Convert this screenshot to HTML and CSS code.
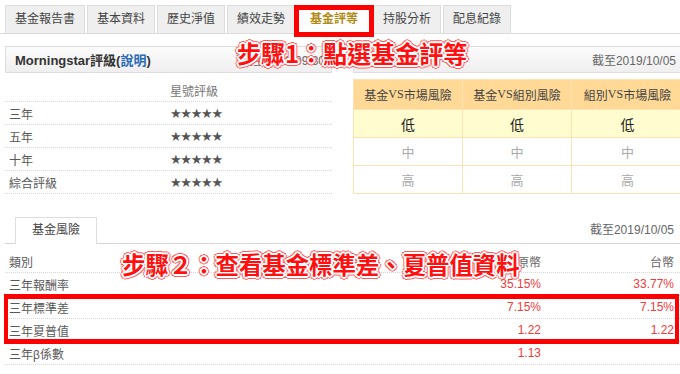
FILE: index.html
```html
<!DOCTYPE html>
<html lang="zh-Hant">
<head>
<meta charset="utf-8">
<title>基金評等</title>
<link rel="stylesheet" href="styles.css">
</head>
<body>
<div class="page">
  <ul class="tabs">
    <li class="tab">基金報告書</li>
    <li class="tab">基本資料</li>
    <li class="tab">歷史淨值</li>
    <li class="tab">績效走勢</li>
    <li class="tab active">基金評等</li>
    <li class="tab">持股分析</li>
    <li class="tab">配息紀錄</li>
  </ul>

  <div class="panels">
    <section class="panel panel-left">
      <div class="box-head">
        <h3 class="box-title">Morningstar評級(<a class="link">說明</a>)</h3>
        <span class="date">截至2019/09/30</span>
      </div>
      <div class="star-table">
        <div class="srow shead"><span class="c1"></span><span class="c2">星號評級</span></div>
        <div class="srow"><span class="c1">三年</span><span class="c2 stars">★★★★★</span></div>
        <div class="srow"><span class="c1">五年</span><span class="c2 stars">★★★★★</span></div>
        <div class="srow"><span class="c1">十年</span><span class="c2 stars">★★★★★</span></div>
        <div class="srow"><span class="c1">綜合評級</span><span class="c2 stars">★★★★★</span></div>
      </div>
    </section>

    <section class="panel panel-right">
      <div class="box-head">
        <h3 class="box-title">風險評估</h3>
        <span class="date">截至2019/10/05</span>
      </div>
      <div class="risk-grid">
        <div class="rg rg-head">基金<span class="vs">VS</span>市場風險</div>
        <div class="rg rg-head">基金<span class="vs">VS</span>組別風險</div>
        <div class="rg rg-head">組別<span class="vs">VS</span>市場風險</div>
        <div class="rg rg-low">低</div>
        <div class="rg rg-low">低</div>
        <div class="rg rg-low">低</div>
        <div class="rg rg-dim">中</div>
        <div class="rg rg-dim">中</div>
        <div class="rg rg-dim">中</div>
        <div class="rg rg-dim">高</div>
        <div class="rg rg-dim">高</div>
        <div class="rg rg-dim">高</div>
      </div>
    </section>
  </div>

  <section class="risk-section">
    <div class="subtabs">
      <span class="subtab">基金風險</span>
      <span class="date">截至2019/10/05</span>
    </div>
    <div class="data-table">
      <div class="drow dhead"><span class="d1">類別</span><span class="d2">原幣</span><span class="d3">台幣</span></div>
      <div class="drow"><span class="d1">三年報酬率</span><span class="d2 val">35.15%</span><span class="d3 val">33.77%</span></div>
      <div class="drow"><span class="d1">三年標準差</span><span class="d2 val">7.15%</span><span class="d3 val">7.15%</span></div>
      <div class="drow"><span class="d1">三年夏普值</span><span class="d2 val">1.22</span><span class="d3 val">1.22</span></div>
      <div class="drow"><span class="d1">三年β係數</span><span class="d2 val">1.13</span><span class="d3 val"></span></div>
    </div>
  </section>

  <div class="hl-box"></div>
  <div class="note note1">步驟1：點選基金評等</div>
  <div class="note note2">步驟２：查看基金標準差、夏普值資料</div>
</div>
</body>
</html>
```

FILE: styles.css
```css
* { box-sizing: border-box; }

html, body {
  margin: 0;
  padding: 0;
  background: #fff;
}

body {
  width: 680px;
  height: 374px;
  overflow: hidden;
  font-family: "Liberation Sans", "Noto Sans CJK TC", sans-serif;
  font-size: 12px;
  color: #595959;
}

.page {
  position: relative;
  width: 690px;
  height: 374px;
}

/* top tabs */
.tabs {
  list-style: none;
  margin: 0;
  padding: 5px 0 0 5px;
  display: flex;
  gap: 2px;
  border-bottom: 1px solid #dcdcdc;
  width: 690px;
}

.tab {
  height: 28px;
  line-height: 27px;
  padding: 0 9px;
  background: #efefef;
  border: 1px solid #dddddd;
  border-bottom: none;
  color: #444;
  margin-bottom: -1px;
}

.tab.active {
  position: relative;
  background: #fff;
  color: #b08a12;
  font-weight: bold;
  padding: 0 12px;
  height: 29px;
}

.tab.active::after {
  content: "";
  position: absolute;
  left: -4px;
  right: -4px;
  top: -1px;
  bottom: -3px;
  border: 5px solid #ff0000;
}

/* panels */
.panels {
  display: flex;
  gap: 21px;
  margin: 12px 0 0 5px;
}

.panel-left { width: 327px; }
.panel-right { width: 330px; }

.box-head {
  height: 27px;
  border: 1px solid #dddddd;
  background: linear-gradient(#fbfbfb, #efefef);
  display: flex;
  align-items: center;
  justify-content: space-between;
  padding: 0 6px 0 9px;
}

.box-title {
  margin: 0;
  font-size: 13px;
  font-weight: bold;
  color: #333;
}

.link { color: #2b6cb5; }

.date {
  color: #666;
  font-size: 12px;
}

.star-table { margin-top: 6px; }

.srow {
  display: flex;
  height: 23px;
  align-items: center;
  border-bottom: 1px dotted #d6d6d6;
}

.srow .c1 { width: 165px; padding-left: 4px; }
.srow .c2 { flex: 1; }
.shead .c2 { color: #777; }

.stars {
  font-family: "DejaVu Sans", sans-serif;
  font-size: 13px;
  color: #555;
  letter-spacing: -1.3px;
}

.risk-grid {
  margin-top: 6px;
  display: grid;
  grid-template-columns: 109px 109px 112px;
  grid-template-rows: 30px 28px 28px 28px;
  border-left: 1px solid #fbe3b4;
  border-top: 1px solid #fbe3b4;
}

.rg {
  display: flex;
  align-items: center;
  justify-content: center;
  border-right: 1px solid #fbe3b4;
  border-bottom: 1px solid #fbe3b4;
  font-size: 13px;
}

.rg-head {
  background: #ffd995;
  color: #444;
  font-size: 12px;
}

.vs { font-family: "Liberation Serif", serif; font-size: 12px; }

.rg-low {
  background: #fffdcf;
  color: #222;
  font-size: 14px;
}

.rg-dim { color: #aaa; }

/* risk section */
.risk-section {
  margin: 23px 0 0 5px;
  width: 675px;
}

.subtabs {
  display: flex;
  align-items: flex-end;
  justify-content: space-between;
  border-bottom: 1px solid #d6d6d6;
  height: 27px;
}

.subtab {
  margin-left: 10px;
  width: 82px;
  height: 27px;
  line-height: 25px;
  text-align: center;
  border: 1px solid #dddddd;
  border-bottom: none;
  background: #fff;
  color: #444;
  font-size: 12px;
  margin-bottom: -1px;
}

.subtabs .date { align-self: center; margin-right: 6px; margin-top: -4px; }

.data-table { margin-top: 6px; }

.drow {
  display: flex;
  height: 23px;
  align-items: center;
  border-bottom: 1px dotted #d6d6d6;
}

.d1 { width: 409px; padding-left: 4px; }
.d2 { width: 133px; text-align: right; padding-right: 6px; }
.d3 { width: 133px; text-align: right; padding-right: 6px; }
.dhead .d2, .dhead .d3 { color: #666; }

.val { color: #ee3b3b; }

/* annotations */
.hl-box {
  position: absolute;
  left: 4px;
  top: 294px;
  width: 675px;
  height: 50px;
  border: 5px solid #ff0000;
  border-left-width: 4px;
  border-right-width: 4px;
}

.note {
  position: absolute;
  font-family: "Noto Sans CJK TC", sans-serif;
  font-weight: 700;
  color: #ff1010;
  white-space: nowrap;
  line-height: 1;
  text-shadow:
    2px 0 #fff, -2px 0 #fff, 0 2px #fff, 0 -2px #fff,
    1.4px 1.4px #fff, -1.4px 1.4px #fff, 1.4px -1.4px #fff, -1.4px -1.4px #fff,
    3px 0 #ff5a5a, -3px 0 #ff5a5a, 0 3px #ff5a5a, 0 -3px #ff5a5a,
    2.2px 2.2px #ff5a5a, -2.2px 2.2px #ff5a5a, 2.2px -2.2px #ff5a5a, -2.2px -2.2px #ff5a5a;
}

.note1 {
  left: 237px;
  top: 41px;
  font-size: 24px;
}

.note2 {
  left: 122px;
  top: 253px;
  font-size: 23.4px;
}
```
